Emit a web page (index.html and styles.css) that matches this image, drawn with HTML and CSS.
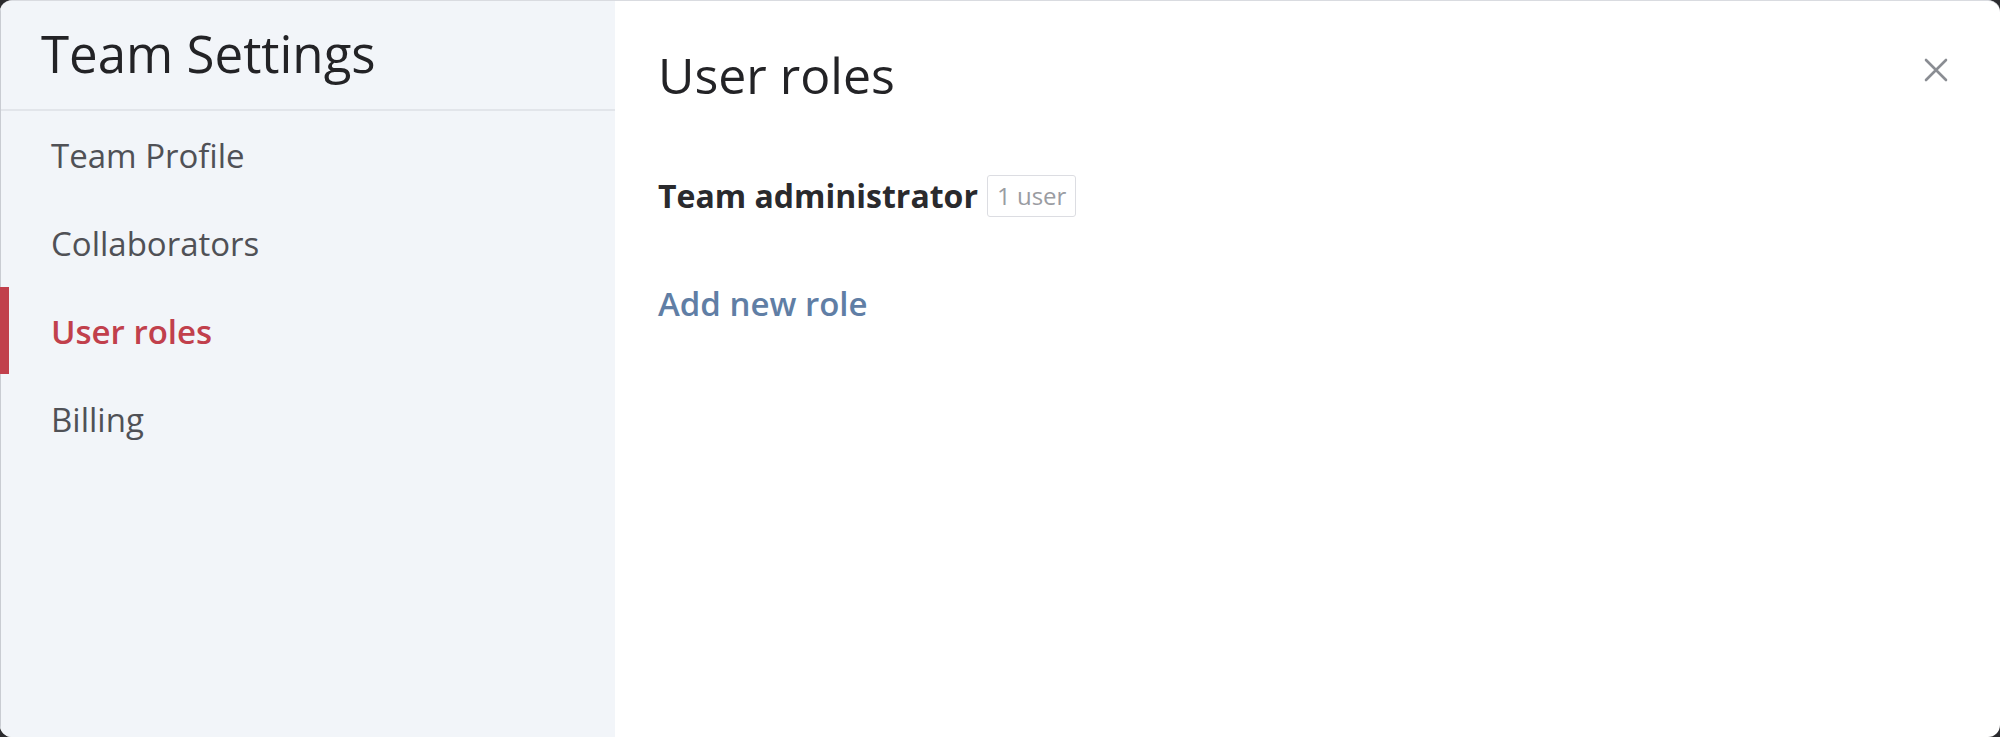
FILE: index.html
```html
<!DOCTYPE html>
<html>
<head>
<meta charset="utf-8">
<link rel="stylesheet" href="styles.css">
</head>
<body>
<div class="modal">
  <aside class="sidebar">
    <div class="side-head"><h1 class="side-title">Team Settings</h1></div>
    <nav class="nav">
      <a class="nav-item">Team Profile</a>
      <a class="nav-item">Collaborators</a>
      <a class="nav-item active">User roles</a>
      <a class="nav-item">Billing</a>
    </nav>
  </aside>
  <main class="content">
    <h2 class="page-title">User roles</h2>
    <div class="role-row">
      <span class="role-name">Team administrator</span>
      <span class="badge">1 user</span>
    </div>
    <a class="add-role">Add new role</a>
    <button class="close" aria-label="Close">
      <svg width="26" height="26" viewBox="0 0 26 26"><path d="M3 3 L23 23 M23 3 L3 23" stroke="#8a8d93" stroke-width="2.6" stroke-linecap="round"/></svg>
    </button>
  </main>
</div>
</body>
</html>
```
FILE: styles.css
```css
html, body {
  margin: 0;
  padding: 0;
  background: #2b2b2e;
  width: 2000px;
  height: 737px;
  overflow: hidden;
  font-family: "Open Sans", "Noto Sans", sans-serif;
}
.modal {
  display: flex;
  width: 2000px;
  height: 737px;
  border-radius: 12px;
  overflow: hidden;
  background: #ffffff;
  border-top: 1px solid #d9dbe0;
  box-sizing: border-box;
}
.sidebar {
  width: 615px;
  flex: none;
  background: #f2f5f9;
  border-left: 1px solid #c9ccd2;
  box-sizing: border-box;
  display: flex;
  flex-direction: column;
}
.side-head {
  height: 110px;
  box-sizing: border-box;
  border-bottom: 2px solid #e2e5ea;
  display: flex;
  align-items: center;
  padding-left: 40px;
}
.side-title {
  margin: 0;
  font-weight: 400;
  font-size: 51px;
  color: #232326;
  line-height: 1;
  padding-bottom: 4px;
}
.nav {
  display: flex;
  flex-direction: column;
}
.nav-item {
  height: 88px;
  display: flex;
  align-items: center;
  padding-left: 50px;
  font-size: 33px;
  color: #505156;
  position: relative;
}
.nav-item.active {
  color: #c1404c;
  font-weight: 600;
}
.nav-item.active::before {
  content: "";
  position: absolute;
  left: -1px;
  top: 0;
  width: 9px;
  height: 87px;
  background: #c1404c;
}
.content {
  flex: 1;
  position: relative;
  padding: 38px 0 0 43px;
  display: flex;
  flex-direction: column;
  align-items: flex-start;
}
.page-title {
  margin: 0;
  font-weight: 400;
  font-size: 50px;
  line-height: 72px;
  color: #232326;
}
.role-row {
  display: flex;
  align-items: center;
  margin-top: 63px;
  gap: 9px;
}
.role-name {
  font-size: 32px;
  font-weight: 700;
  color: #2a2a2d;
  line-height: 44px;
}
.badge {
  font-size: 24px;
  color: #9a9ca2;
  border: 1px solid #dcdde2;
  border-radius: 3px;
  padding: 0 9px;
  height: 42px;
  line-height: 40px;
  box-sizing: border-box;
}
.add-role {
  margin-top: 64px;
  font-size: 33px;
  font-weight: 600;
  color: #607ea5;
  line-height: 44px;
}
.close {
  position: absolute;
  top: 56px;
  right: 51px;
  padding: 0;
  border: 0;
  background: none;
  width: 26px;
  height: 26px;
  display: block;
}
.close svg { display: block; }
```
